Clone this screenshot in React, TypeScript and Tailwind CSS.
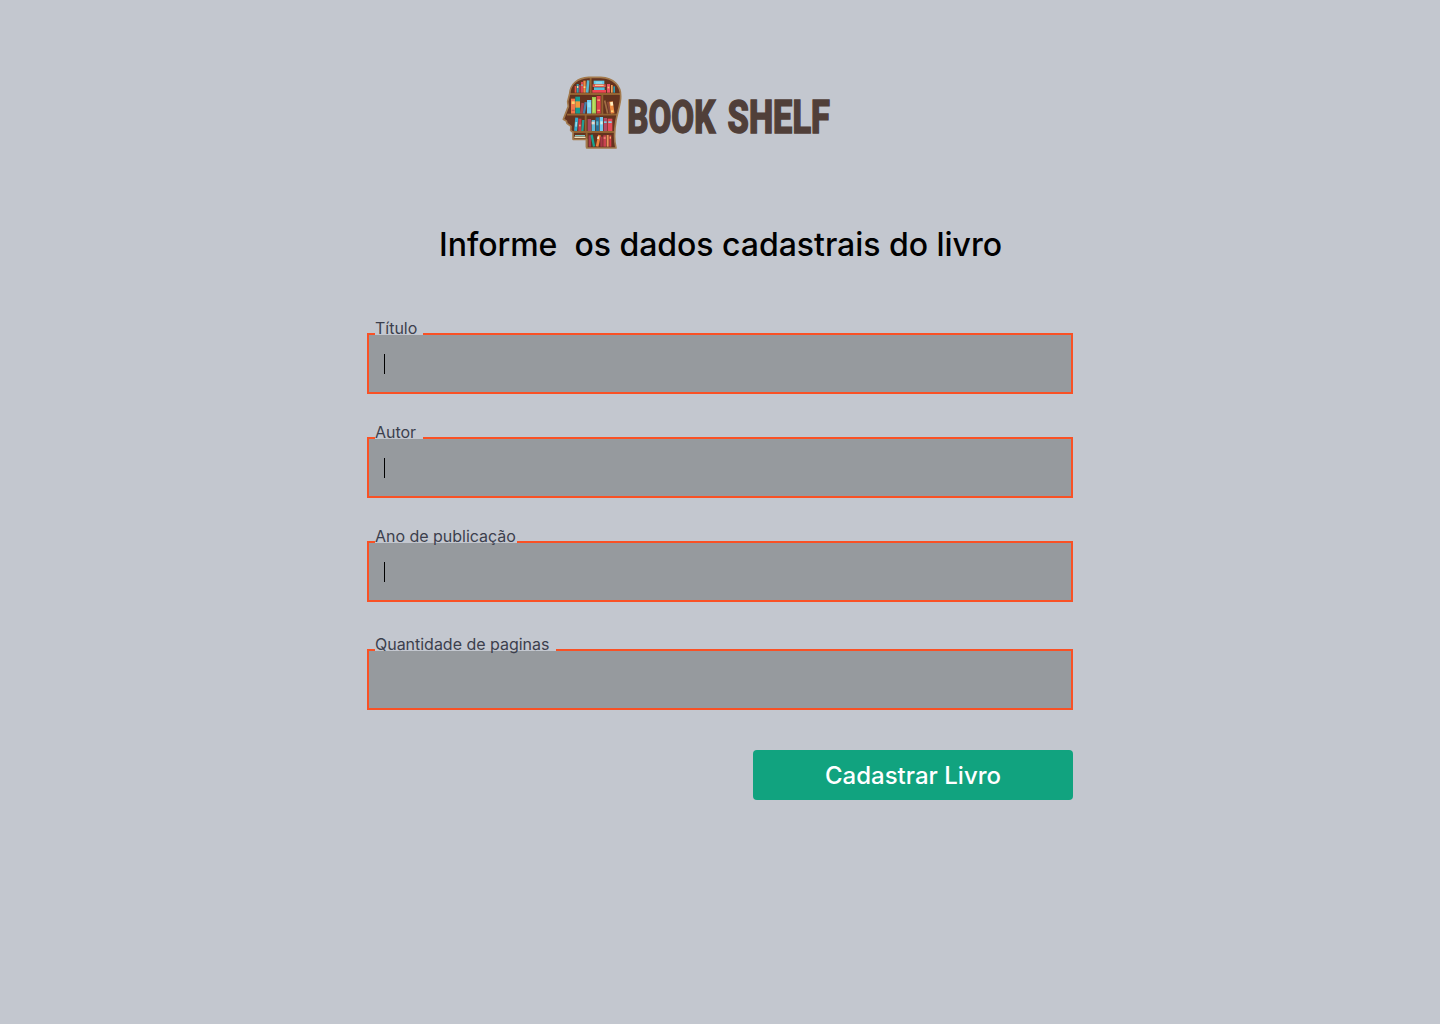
/* x, y, width, height, colour, tilt */
type Book = [number, number, number, number, string, number?];

const BOOKS: Book[] = [
  [59, 48, 5, 20, "#e8513f"],
  [65, 42, 6, 26, "#38a0b0"],
  [72, 45, 5, 23, "#b73749"],
  [78, 36, 6, 32, "#d94653"],
  [85, 32, 7, 36, "#f28a43"],
  [94, 31, 8, 37, "#57b8cf", 5],
  [116, 32, 32, 11, "#62c9e8"],
  [113, 43, 39, 8, "#e4574e"],
  [120, 44, 26, 4, "#f5c795"],
  [117, 52, 32, 8, "#58bdd9"],
  [112, 60, 41, 8, "#ee4754"],
  [156, 42, 9, 26, "#e85364"],
  [168, 45, 5, 23, "#f2a15a"],
  [175, 49, 5, 19, "#2b9eb0"],
  [48, 86, 12, 45, "#f27649"],
  [61, 80, 14, 51, "#169c91"],
  [61, 94, 14, 19, "#f39a3e"],
  [77, 99, 8, 32, "#a6424c", 8],
  [86, 96, 7, 35, "#457eab", 10],
  [96, 90, 13, 41, "#71c9ef"],
  [111, 81, 12, 50, "#9ac951"],
  [125, 78, 12, 53, "#de424d"],
  [151, 91, 5, 40, "#a26e45", -13],
  [159, 95, 6, 36, "#8a4a3a", -12],
  [165, 94, 11, 37, "#f08c43", -8],
  [59, 143, 9, 40, "#35a9cc", 5],
  [70, 146, 9, 37, "#c63a4b"],
  [80, 150, 7, 33, "#239d91", 5],
  [98, 147, 10, 36, "#a84862"],
  [110, 150, 10, 33, "#62b9da"],
  [122, 142, 10, 41, "#276f97"],
  [134, 141, 10, 42, "#70cced"],
  [146, 144, 10, 39, "#b34a65"],
  [158, 146, 14, 37, "#e54c58"],
  [60, 195, 30, 4, "#82c4bd"],
  [58, 200, 34, 4, "#efe0bb"],
  [101, 196, 7, 34, "#a63c4f"],
  [110, 194, 7, 36, "#15a391", -12],
  [126, 195, 8, 35, "#ee833d", 12],
  [136, 200, 7, 30, "#aa3848"],
  [145, 196, 8, 34, "#cb4250"],
  [155, 195, 6, 35, "#f0915d"],
  [163, 196, 6, 34, "#d43b45"],
];

const BANDS: Book[] = [
  [66, 48, 4, 6, "#f1dca4"],
  [79, 43, 4, 5, "#6ac0ce"],
  [86, 49, 5, 5, "#f4db89"],
  [122, 35, 19, 6, "#91d9ed"],
  [158, 50, 5, 5, "#f7ce75"],
  [50, 94, 9, 8, "#ffd16a"],
  [50, 119, 9, 4, "#cb5546"],
  [98, 97, 9, 15, "#92e2f8"],
  [114, 85, 5, 42, "#c1dd63"],
  [127, 88, 8, 5, "#f7a061"],
  [127, 119, 8, 4, "#f6b06d"],
  [166, 96, 8, 11, "#fff0c4", -8],
  [168, 121, 7, 5, "#ffd171"],
  [61, 156, 5, 14, "#96dceb", 5],
  [72, 164, 5, 5, "#f29c70"],
  [110, 155, 9, 8, "#e8d8d0"],
  [124, 154, 6, 12, "#63b7ce"],
  [136, 154, 7, 9, "#d6f0e8"],
  [147, 154, 8, 5, "#76cce0"],
  [160, 154, 10, 5, "#83d2e3"],
  [127, 199, 5, 8, "#fff3d2", 12],
  [146, 202, 6, 4, "#f2a07e"],
  [164, 200, 4, 6, "#f5ae6b"],
];

const HEAD =
  "M44 71C46 43 66 24 101 22H137C176 24 198 47 197 79C198 97 189 122 183 151C178 181 177 211 183 234H95V208H54V187L47 181L48 169L36 160L34 153L25 148L40 109L38 95Z";

function renderBook([x, y, width, height, fill, tilt = 0]: Book, index: number) {
  return (
    <rect
      key={index}
      x={x}
      y={y}
      width={width}
      height={height}
      fill={fill}
      transform={`rotate(${tilt} ${x + width / 2} ${y + height / 2})`}
    />
  );
}

function BookHead() {
  return (
    <svg className="h-[85px] w-[75px] shrink-0" viewBox="0 0 225 255" aria-hidden="true">
      <path d={HEAD} fill="#64331f" />
      {BOOKS.map(renderBook)}
      {BANDS.map(renderBook)}
      <path
        d="M43 72H196M36 134H186M54 186H178M107 24V72M142 72V133M92 134V184M95 187V232"
        fill="none"
        stroke="#946332"
        strokeWidth="5.5"
      />
      <path d={HEAD} fill="none" stroke="#a37a4d" strokeWidth="5" strokeLinejoin="round" />
    </svg>
  );
}

function Logo() {
  return (
    <div className="flex h-[85px] w-[285px] items-start" role="img" aria-label="Book Shelf">
      <BookHead />
      <svg className="-ml-[9px] h-[85px] w-[219px] shrink-0" viewBox="0 0 219 85">
        <g
          fill="#503f39"
          stroke="#503f39"
          strokeWidth="1.5"
          fontFamily="Roboto, sans-serif"
          fontWeight="800"
          fontSize="45.5"
        >
          <text x="6.3" y="62.8" textLength="88" lengthAdjust="spacingAndGlyphs">
            BOOK
          </text>
          <text x="106.6" y="62.8" textLength="102.2" lengthAdjust="spacingAndGlyphs">
            SHELF
          </text>
        </g>
      </svg>
    </div>
  );
}

type FieldProps = { label: string; gap: string; caret?: boolean };

function Field({ label, gap, caret = false }: FieldProps) {
  return (
    <div className="relative flex h-[61px] items-center border-2 border-[#f95125] bg-[#969a9e] pl-[15px]">
      <div className={`absolute -top-0.5 left-1.5 h-0.5 bg-[#c3c7cf] ${gap}`} />
      <label className="absolute -top-[17px] left-1.5 whitespace-nowrap text-base leading-5 tracking-[-0.02px] text-[#3c3f4d]">
        {label}
      </label>
      {caret && <span className="h-5 w-px bg-black" />}
    </div>
  );
}

export default function App() {
  return (
    <main className="flex h-screen min-h-[1024px] flex-col items-center bg-[#c3c7cf] pt-[70px] font-['Inter',sans-serif]">
      <div className="w-[330px]">
        <Logo />
      </div>
      <h1 className="mt-[70px] whitespace-pre pl-px text-[32px] leading-10 font-medium tracking-[-0.03px] text-black">
        {"Informe  os dados cadastrais do livro"}
      </h1>
      <form className="mt-[68px] flex w-[706px] flex-col">
        <div className="flex flex-col gap-[43px]">
          <Field label="Título" gap="w-12" caret />
          <Field label="Autor" gap="w-12" caret />
          <Field label="Ano de publicação" gap="w-[142px]" caret />
        </div>
        <div className="mt-[47px]">
          <Field label="Quantidade de paginas" gap="w-[181px]" />
        </div>
        <button
          type="button"
          className="mt-10 h-[50px] w-80 self-end rounded bg-[#11a37f] pt-0.5 text-2xl font-medium text-white"
        >
          Cadastrar Livro
        </button>
      </form>
    </main>
  );
}
